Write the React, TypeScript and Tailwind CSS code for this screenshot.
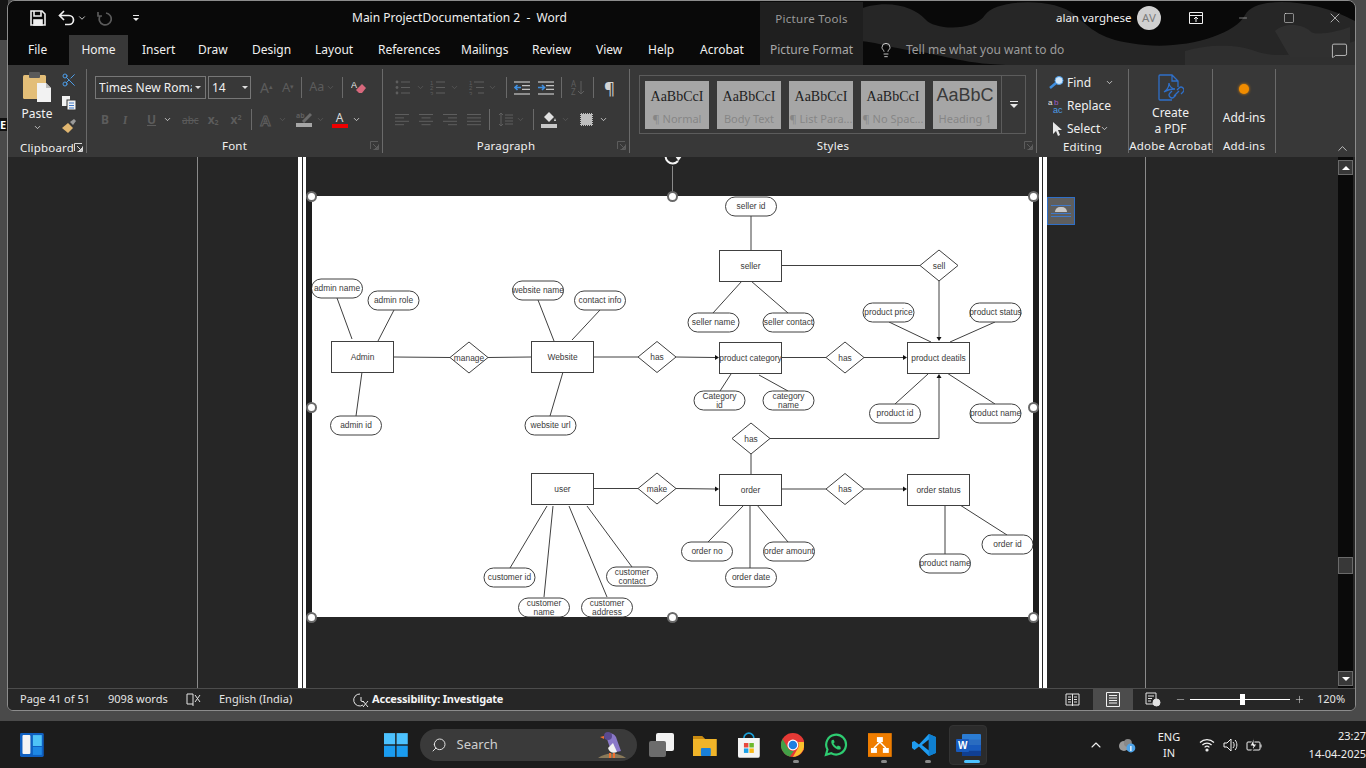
import React from "react";
import { ChevronDown, ChevronUp, X, Minus, Square, Lightbulb, MessageSquare, Search, Scissors, Plus } from "lucide-react";

const FONT = { fontFamily: '"Noto Sans","Open Sans",sans-serif' } as const;

type P = { x: number; y: number };
const rects: [string, number, number][] = [
  ["Admin", 332, 341], ["Website", 532, 341], ["seller", 720, 250], ["product category", 720, 342],
  ["product deatils", 908, 342], ["user", 532, 473], ["order", 720, 474], ["order status", 908, 474],
];
const diamonds: [string, number, number][] = [
  ["manage", 470, 357.5], ["has", 658, 357], ["sell", 940, 265.5], ["has", 846, 357.5],
  ["has", 752, 438.5], ["make", 658, 488.5], ["has", 846, 489],
];
const pills: [string[], number, number][] = [
  [["admin name"], 338, 288.5], [["admin role"], 394.5, 300.5], [["admin id"], 357, 425.5],
  [["website name"], 539, 290.5], [["contact info"], 601, 300.5], [["website url"], 551.5, 425.5],
  [["seller id"], 752, 206.5], [["seller name"], 714.5, 322.5], [["seller contact"], 789.5, 322.5],
  [["product price"], 889.5, 312.5], [["product status"], 996.5, 312.5], [["product id"], 896, 413.5], [["product name"], 996.5, 413.5],
  [["Category", "id"], 720.5, 400.5], [["category", "name"], 789.5, 400.5],
  [["order no"], 708, 551.5], [["order amount"], 790, 551.5], [["order date"], 752, 577.5],
  [["product name"], 946, 563.5], [["order id"], 1008.5, 544.5],
  [["customer id"], 510.5, 577.5], [["customer", "contact"], 633, 576.5], [["customer", "name"], 545, 607.5], [["customer", "address"], 608, 607.5],
];
const lines: number[][] = [
  [338, 298, 353, 339], [395, 310, 379, 341], [363, 372, 357, 416], [395, 357, 451, 357.5], [489, 357.5, 532, 357],
  [539, 300, 555, 341], [601, 310, 573, 340], [564, 372, 551, 416], [595, 357, 639, 357], [677, 357, 716, 357.5],
  [752, 216, 752, 250], [783, 265.5, 921, 265.5], [940, 281, 940, 337], [743, 281, 714, 313], [752, 281, 789, 313],
  [783, 357.5, 827, 357.5], [865, 357.5, 904, 357.5], [890, 322, 932, 342], [996, 322, 951, 342],
  [929, 374, 896, 404], [948, 373, 996, 404], [732, 374, 721, 391], [760, 375, 789, 391],
  [771, 438.5, 940, 438.5], [940, 438.5, 940, 378], [752, 454, 752, 474],
  [595, 488.5, 639, 488.5], [676.5, 488.5, 716, 489], [783, 489, 827, 489], [865, 489, 904, 489],
  [745, 505, 709, 542], [751, 505, 751, 568], [758, 505, 789, 542], [946, 506, 946, 554], [961, 505, 1008, 535],
  [548, 506, 511, 568], [554, 506, 545, 597], [570, 506, 608, 597], [588, 506, 633, 567],
];

function Diagram() {
  return (
    <svg width="721" height="421" viewBox="313 196 721 421" className="block bg-white">
      <g fill="none" stroke="#404040" strokeWidth="1">
        {lines.map((l, i) => <line key={i} x1={l[0]} y1={l[1]} x2={l[2]} y2={l[3]} />)}
        {rects.map(([t, x, y], i) => <rect key={i} x={x + 0.5} y={y + 0.5} width="62" height="31" fill="#fff" />)}
        {diamonds.map(([t, x, y], i) => <polygon key={i} fill="#fff" points={`${x - 19},${y} ${x},${y - 15.5} ${x + 19},${y} ${x},${y + 15.5}`} />)}
        {pills.map(([t, x, y], i) => <rect key={i} x={x - 25.5} y={y - 9.5} width="51" height="19" rx="9.5" fill="#fff" />)}
      </g>
      <g fill="#111">
        <polygon points="720,357.5 716,355 716,360" /><polygon points="908,357.5 904,355 904,360" />
        <polygon points="940,341 937.5,337 942.5,337" /><polygon points="940,374 937.5,378 942.5,378" />
        <polygon points="720,489 716,486.5 716,491.5" /><polygon points="908,489 904,486.5 904,491.5" />
      </g>
      <g fill="#3a3a3a" fontFamily='"Liberation Sans",sans-serif' fontSize="8.4" textAnchor="middle">
        {rects.map(([t, x, y], i) => <text key={i} x={x + 31.5} y={y + 18.5}>{t}</text>)}
        {diamonds.map(([t, x, y], i) => <text key={i} x={x} y={y + 3}>{t}</text>)}
        {pills.map(([t, x, y], i) =>
          t.length === 1 ? <text key={i} x={x} y={y + 2.5}>{t[0]}</text> : (
            <text key={i} x={x}><tspan x={x} y={y - 1.8}>{t[0]}</tspan><tspan x={x} y={y + 7.4}>{t[1]}</tspan></text>
          ))}
      </g>
    </svg>
  );
}

function Chev({ dim = false, size = 9 }: { dim?: boolean; size?: number }) {
  return <ChevronDown size={size} strokeWidth={2} color={dim ? "#5c5c5c" : "#e8e8e8"} />;
}
function Sep({ h = 21 }: { h?: number }) {
  return <div className="w-px bg-[#6a6a6a]" style={{ height: h }} />;
}
function Launcher({ dim = false }: { dim?: boolean }) {
  const c = dim ? "#5c5c5c" : "#d8d8d8";
  return (
    <svg width="9" height="9" viewBox="0 0 9 9" fill="none" stroke={c}>
      <path d="M0.5 8V.5H8M8.5 3.5V8.5H3.5M3 3l4 4M7.5 5v2.5H5" />
    </svg>
  );
}
function GroupLabel({ children, launcher, dim }: { children: string; launcher?: boolean; dim?: boolean }) {
  return (
    <div className="h-[16px] relative flex items-center justify-center text-[11.5px] text-[#f0f0f0] tracking-[0.2px] leading-none">
      {children}
      {launcher && <span className="absolute right-[3px] top-[3px]"><Launcher dim={dim} /></span>}
    </div>
  );
}
const G = ({ c = "#5e5e5e", children, w = 14, h = 14, vb }: { c?: string; children: React.ReactNode; w?: number; h?: number; vb?: string }) => (
  <svg width={w} height={h} viewBox={vb || `0 0 ${w} ${h}`} fill="none" stroke={c} strokeWidth="1">{children}</svg>
);
function AlignIco({ kind }: { kind: "l" | "c" | "r" | "j" }) {
  const rows = [0, 1, 2, 3].map((i) => {
    const short = i % 2 === 1;
    const len = kind === "j" || !short ? 14 : 9;
    const x = kind === "l" ? 0 : kind === "r" ? 14 - len : (14 - len) / 2;
    return <line key={i} x1={x} x2={x + len} y1={1.5 + i * 3.4} y2={1.5 + i * 3.4} />;
  });
  return <G h={13}>{rows}</G>;
}
function ListIco({ n }: { n: number }) {
  return (
    <G w={15} h={15} c="#5e5e5e">
      {[2, 7.5, 13].map((y, i) => (
        <g key={i}>
          {n === 0 ? <circle cx="2" cy={y} r="1.4" fill="#5e5e5e" stroke="none" /> : <text x="0" y={y + 2.5} fontSize="6" fill="#5e5e5e" stroke="none" fontFamily="Liberation Sans">{i + 1}</text>}
          <line x1={n === 2 ? 5 + i * 2 : 6} x2="15" y1={y} y2={y} />
        </g>
      ))}
    </G>
  );
}
function IndentIco({ dir }: { dir: number }) {
  return (
    <G w={16} h={14} c="#e4e4e4">
      <path d="M0 1h16M8 4.7h8M8 8.3h8M0 13h16" />
      <path d={dir < 0 ? "M7 6.5H1M3.5 4L1 6.5 3.5 9" : "M0 6.5h6M4 4l2.5 2.5L4 9"} stroke="#3f8fe0" strokeWidth="1.6" />
    </G>
  );
}
const DimText = ({ children, cls = "" }: { children: React.ReactNode; cls?: string }) => (
  <span className={`text-[#5c5c5c] leading-none ${cls}`}>{children}</span>
);

function Clipboard() {
  return (
    <div className="w-[79px] flex flex-col border-r border-[#6a6a6a]">
      <div className="h-[68px] flex">
        <div className="w-[55px] flex flex-col items-center pl-[3px]">
          <svg width="29" height="31" viewBox="0 0 29 31" className="mt-[2px]">
            <rect x="0" y="4" width="23" height="24" rx="1.5" fill="#e3be78" />
            <rect x="6" y="1" width="11" height="6" rx="1" fill="#5a5a5a" />
            <path d="M14 12h9l5 5v14H14z" fill="#f2f2f2" />
            <path d="M23 12v5h5" fill="#bbb" />
          </svg>
          <div className="text-[12px] text-[#f2f2f2] leading-none mt-[6px]">Paste</div>
          <div className="mt-[3px]"><Chev /></div>
        </div>
        <div className="flex flex-col items-center w-[18px] gap-[7px] pt-[3px] -ml-[3px]">
          <Scissors size={16} color="#4d9de8" strokeWidth={1.5} className="-scale-y-100" />
          <svg width="16" height="16" viewBox="0 0 16 16">
            <rect x="1" y="1" width="8" height="10" fill="#f2f2f2" /><rect x="6" y="5" width="9" height="10" fill="#f2f2f2" stroke="#333" />
            <path d="M8 8h5M8 10.5h5M8 13h5" stroke="#3f78c8" />
          </svg>
          <svg width="17" height="16" viewBox="0 0 17 16">
            <path d="M1 10l6-5 5 5-5 5z" fill="#e0b670" /><path d="M9 4l4-3 2 2-3 4z" fill="#9a9a9a" />
          </svg>
        </div>
      </div>
      <div className="mt-[6px]"><GroupLabel launcher>Clipboard</GroupLabel></div>
    </div>
  );
}

function FontGroup() {
  return (
    <div className="w-[296px] flex flex-col border-r border-[#6a6a6a]">
      <div className="h-[74px] pl-[8px] pt-[7px]">
        <div className="flex items-center h-[23px]">
          <div className="w-[111px] h-[23px] border border-[#777] flex items-center pl-[3px] text-[12px] text-[#f0f0f0] whitespace-nowrap overflow-hidden">
            <span className="w-[93px] overflow-hidden shrink-0">Times New Roman</span>
            <span className="ml-[3px] w-0 h-0 border-x-[3px] border-x-transparent border-t-[3px] border-t-[#ddd]" />
          </div>
          <div className="ml-[2px] w-[43px] h-[23px] border border-[#777] flex items-center pl-[3px] text-[12px] text-[#f0f0f0]">
            <span className="w-[30px]">14</span>
            <span className="w-0 h-0 border-x-[3.5px] border-x-transparent border-t-[3.5px] border-t-[#ddd]" />
          </div>
          <DimText cls="text-[14px] ml-[9px]">A<sup className="text-[7px]">▴</sup></DimText>
          <DimText cls="text-[13px] ml-[9px]">A<sup className="text-[7px]">▾</sup></DimText>
          <div className="ml-[7px]"><Sep /></div>
          <DimText cls="text-[12.5px] ml-[7px]">Aa</DimText>
          <span className="ml-[2px]"><Chev dim /></span>
          <div className="ml-[7px]"><Sep /></div>
          <svg width="16" height="16" viewBox="0 0 16 16" className="ml-[8px]">
            <path d="M8 13l-3-3 6-6 4 4-4 5z" fill="#d8687c" /><text x="0" y="8" fontSize="9" fill="#e8e8e8" fontFamily="Liberation Sans">A</text>
          </svg>
        </div>
        <div className="flex items-center h-[23px] mt-[9px] text-[12px] font-bold">
          <DimText cls="ml-[6px] w-[16px]">B</DimText>
          <DimText cls="ml-[6px] w-[14px] italic font-serif">I</DimText>
          <DimText cls="ml-[10px] underline">U</DimText>
          <span className="ml-[7px]"><Chev /></span>
          <DimText cls="ml-[10px] line-through text-[10px] font-normal">abc</DimText>
          <DimText cls="ml-[9px]">x<sub className="text-[7px]">2</sub></DimText>
          <DimText cls="ml-[12px]">x<sup className="text-[7px]">2</sup></DimText>
          <div className="ml-[9px]"><Sep /></div>
          <svg width="16" height="16" viewBox="0 0 16 16" className="ml-[7px]"><text x="1" y="14" fontSize="15" fill="none" stroke="#5e5e5e" fontFamily="Liberation Sans">A</text></svg>
          <span className="ml-[3px]"><Chev dim /></span>
          <div className="ml-[9px] w-[16px] flex flex-col items-center">
            <svg width="16" height="11" viewBox="0 0 16 11"><path d="M7 10l8-8" stroke="#6a6a6a" strokeWidth="3" /><text x="0" y="6" fontSize="7" fill="#5e5e5e" stroke="none">ab</text></svg>
            <div className="w-[16px] h-[4px] bg-[#a6a6a6]" />
          </div>
          <span className="ml-[4px]"><Chev dim /></span>
          <div className="ml-[7px] w-[16px] flex flex-col items-center">
            <span className="text-[12px] text-[#d8d8d8] font-normal leading-[12px]">A</span>
            <div className="w-[16px] h-[4px] bg-[#f00000]" />
          </div>
          <span className="ml-[4px]"><Chev /></span>
        </div>
      </div>
      <GroupLabel launcher dim>Font</GroupLabel>
    </div>
  );
}

function ParaGroup() {
  return (
    <div className="w-[247px] flex flex-col border-r border-[#6a6a6a]">
      <div className="h-[74px] pt-[7px] pl-[12px]">
        <div className="flex items-center h-[23px]">
          <ListIco n={0} /><span className="ml-[6px]"><Chev dim /></span>
          <span className="ml-[5px]"><ListIco n={1} /></span><span className="ml-[5px]"><Chev dim /></span>
          <span className="ml-[10px]"><ListIco n={2} /></span><span className="ml-[4px]"><Chev dim /></span>
          <div className="ml-[9px]"><Sep /></div>
          <span className="ml-[7px]"><IndentIco dir={-1} /></span>
          <span className="ml-[8px]"><IndentIco dir={1} /></span>
          <div className="ml-[7px]"><Sep /></div>
          <svg width="14" height="16" viewBox="0 0 14 16" className="ml-[9px]"><text x="0" y="7" fontSize="8" fill="#5e5e5e">A</text><text x="0" y="15" fontSize="8" fill="#5e5e5e">Z</text><path d="M10 1v13M7 11l3 3 3-3" stroke="#5e5e5e" fill="none" /></svg>
          <div className="ml-[8px]"><Sep /></div>
          <span className="ml-[10px] text-[17px] text-[#d4d4d4] leading-none">¶</span>
        </div>
        <div className="flex items-center h-[23px] mt-[9px]">
          <AlignIco kind="l" /><span className="ml-[10px]"><AlignIco kind="c" /></span><span className="ml-[10px]"><AlignIco kind="r" /></span><span className="ml-[10px]"><AlignIco kind="j" /></span>
          <div className="ml-[8px]"><Sep /></div>
          <svg width="15" height="15" viewBox="0 0 15 15" className="ml-[8px]" fill="none" stroke="#5e5e5e"><path d="M3 1v13M1 3l2-2 2 2M1 12l2 2 2-2M7 3h8M7 6h8M7 9h8M7 12h8" /></svg>
          <span className="ml-[3px]"><Chev dim /></span>
          <div className="ml-[8px]"><Sep /></div>
          <div className="ml-[7px] w-[16px] flex flex-col items-center">
            <svg width="16" height="12" viewBox="0 0 16 12"><path d="M3 5l5-5 5 5-5 5z" fill="#e0e0e0" /><path d="M14 6l1 3h-2z" fill="#e0e0e0" /></svg>
            <div className="w-[16px] h-[4px] bg-[#c8c8c8]" />
          </div>
          <span className="ml-[4px]"><Chev dim /></span>
          <div className="ml-[10px] w-[13px] h-[13px] bg-[#bdbdbd] border border-dotted border-[#333]" />
          <span className="ml-[6px]"><Chev /></span>
        </div>
      </div>
      <GroupLabel launcher dim>Paragraph</GroupLabel>
    </div>
  );
}

const styleItems: [string, string, string][] = [
  ["AaBbCcI", "¶ Normal", "serif"], ["AaBbCcI", "Body Text", "serif"], ["AaBbCcI", "¶ List Para...", "serif"],
  ["AaBbCcI", "¶ No Spac...", "serif"], ["AaBbC", "Heading 1", "sans"],
];
function Styles() {
  return (
    <div className="w-[407px] flex flex-col border-r border-[#6a6a6a]">
      <div className="h-[74px] pt-[6px] pl-[9px]">
        <div className="w-[387px] h-[59px] border border-[#5c5c5c] flex items-start">
          <div className="flex gap-[8px] pl-[5px] pt-[5px]">
            {styleItems.map(([a, b, f], i) => (
              <div key={i} className="w-[64px] h-[48px] bg-[#a6a6a6] flex flex-col items-center overflow-hidden">
                <div className={f === "serif" ? "text-[#1e1e1e] text-[14px] mt-[6px] h-[20px] leading-[20px] font-['Liberation_Serif']" : "text-[#3a3a3a] text-[18px] mt-[3px] h-[23px] leading-[23px] font-['Liberation_Sans']"}>{a}</div>
                <div className="text-[#868686] text-[11px] mt-[5px] leading-[14px] whitespace-nowrap">{b}</div>
              </div>
            ))}
          </div>
          <div className="ml-[4px] w-[24px] h-[57px] border-l border-[#5c5c5c] flex flex-col items-center justify-center">
            <div className="w-[8px] h-px bg-[#e8e8e8] mb-[2px]" />
            <span className="w-0 h-0 border-x-[4px] border-x-transparent border-t-[4px] border-t-[#e8e8e8]" />
          </div>
        </div>
      </div>
      <GroupLabel launcher dim>Styles</GroupLabel>
    </div>
  );
}

function Editing() {
  return (
    <div className="w-[92px] flex flex-col border-r border-[#6a6a6a]">
      <div className="h-[74px] pl-[12px] text-[12px] text-[#f0f0f0] leading-none">
        <div className="flex items-center h-[23px] mt-[2px]">
          <svg width="15" height="14" viewBox="0 0 15 14"><circle cx="10" cy="4.5" r="4" fill="#cfe6fb" stroke="#4d9de8" /><path d="M7 7L1 12" stroke="#3f8fe0" strokeWidth="2.5" /></svg>
          <span className="ml-[3px]">Find</span><span className="ml-[14px]"><Chev /></span>
        </div>
        <div className="flex items-center h-[23px]">
          <svg width="16" height="16" viewBox="0 0 16 16" className="-ml-[1px]"><text x="0" y="7" fontSize="8" fill="#e4e4e4" fontFamily="Liberation Sans">a</text><text x="6" y="7" fontSize="8" fill="#a05cc8" fontFamily="Liberation Sans">b</text><text x="5" y="15" fontSize="9" fill="#4d9de8" fontFamily="Liberation Sans">ac</text></svg>
          <span className="ml-[3px]">Replace</span>
        </div>
        <div className="flex items-center h-[23px]">
          <svg width="12" height="16" viewBox="0 0 12 16" className="ml-[3px]"><path d="M1 1v12l3-3 2 5 2-1-2-5h4z" fill="#e8e8e8" /></svg>
          <span className="ml-[3px]">Select</span><Chev />
        </div>
      </div>
      <GroupLabel>Editing</GroupLabel>
    </div>
  );
}

function Acrobat() {
  return (
    <div className="w-[84px] flex flex-col border-r border-[#6a6a6a]">
      <div className="h-[74px] flex flex-col items-center text-[12px] text-[#f0f0f0] leading-[16px]">
        <svg width="26" height="30" viewBox="0 0 26 30" fill="none" stroke="#2f6fc8" strokeWidth="1.3" className="mt-[5px]">
          <path d="M14 26H2a1 1 0 0 1-1-1V2a1 1 0 0 1 1-1h12l6 6v6M14 1v6h6" />
          <path d="M6 18c3-2 5-6 5-9 0 3 3 6 6 6-4 0-8 1-11 3z" />
          <path d="M16 22l5-5m-2-1l2-2a2.5 2.5 0 0 1 4 4l-2 2m-5 1l-2 2a2.5 2.5 0 0 1-4-4l2-2" />
        </svg>
        <div className="mt-[1px]">Create</div>
        <div>a PDF</div>
      </div>
      <GroupLabel>Adobe Acrobat</GroupLabel>
    </div>
  );
}

function AddIns() {
  return (
    <div className="w-[63px] flex flex-col border-r border-[#6a6a6a]">
      <div className="h-[74px] flex flex-col items-center text-[12px] text-[#f0f0f0] leading-[16px]">
        <div className="w-[10px] h-[10px] rounded-full bg-[#f08c00] mt-[15px] shadow-[0_0_3px_#f08c00]" />
        <div className="mt-[16px]">Add-ins</div>
      </div>
      <GroupLabel>Add-ins</GroupLabel>
    </div>
  );
}

function Handle({ x, y }: { x: string; y: string }) {
  return <div className={`absolute ${x} ${y} w-[11px] h-[11px] rounded-full bg-white border-[2px] border-[#6a6a6a]`} />;
}

function Tab({ t, cls = "" }: { t: string; cls?: string }) {
  return <div className={`h-[30px] flex items-center whitespace-nowrap ${cls}`}>{t}</div>;
}

function TrayIcons() {
  return (
    <>
      <svg width="16" height="14" viewBox="0 0 16 14" fill="none" stroke="#f0f0f0" strokeWidth="1.2"><path d="M1 4.5a10 10 0 0 1 14 0M3.4 7a6.5 6.5 0 0 1 9.2 0M5.6 9.4a3.4 3.4 0 0 1 4.8 0" /><circle cx="8" cy="12" r="1" fill="#f0f0f0" /></svg>
      <svg width="16" height="16" viewBox="0 0 16 16" fill="none" stroke="#f0f0f0" className="ml-[8px]"><path d="M1 6h3l4-4v12l-4-4H1zM10 5c1.5 1.5 1.5 4.5 0 6M12 3c2.5 2.5 2.5 7.5 0 10" /></svg>
      <svg width="17" height="15" viewBox="0 0 17 15" fill="none" stroke="#f0f0f0" className="ml-[7px]"><rect x="1" y="5" width="13" height="8" rx="1" /><path d="M15 7.5v3" /><path d="M8 1L4 9h3l-1 5 5-7H8z" fill="#f0f0f0" stroke="#1c1c1c" /></svg>
    </>
  );
}

export default function App() {
  return (
    <div className="w-[1366px] h-[768px] overflow-hidden flex flex-col bg-[#4a4a4a] relative" style={FONT}>
      <div className="absolute left-0 top-0 w-[8px] h-[40px] bg-[#161616]" />
      <div className="absolute left-0 top-[118px] w-[8px] h-[13px] bg-[#111] text-white text-[11px] font-bold leading-[13px]">E</div>

      {/* window */}
      <div className="ml-[7px] w-[1349px] h-[711px] shrink-0 relative rounded-t-[8px] rounded-b-[6px] border border-[#8c8c8c] overflow-hidden flex flex-col bg-[#262626] z-10">
        {/* title and tabs */}
        <div className="h-[64px] shrink-0 bg-[#090909] relative">
          <svg width="500" height="64" viewBox="0 0 500 64" className="absolute right-0 top-0" fill="#262626">
            <path d="M0 10c30-14 60-4 70 8s50 12 60-4 70-18 90 0 30 26 70 30 90-10 100-30 70-16 110 6v44H160c-50 0-70-10-100-14S20 40 0 40z" />
            <path d="M330 50c20-6 50-8 70 0s60 4 100-10v24H330z" fill="#2f2f2f" />
            <path d="M420 30c10-10 30-6 35 0s30 0 40-4v30h-60z" fill="#303030" />
          </svg>
          <div className="relative h-[34px] flex items-center text-[#f0f0f0]">
            <svg width="18" height="18" viewBox="0 0 18 18" className="ml-[21px]" fill="none" stroke="#f0f0f0" strokeWidth="1.6"><path d="M2 2h11l3 3v11H2z" /><path d="M5 2v5h7V2" /><rect x="5" y="11" width="8" height="5" fill="#f0f0f0" /></svg>
            <svg width="18" height="16" viewBox="0 0 18 16" className="ml-[11px]" fill="none" stroke="#f0f0f0" strokeWidth="1.7"><path d="M6 1L1.5 5.5 6 10M2 5.5h9a4.5 4.5 0 0 1 0 9H7" /></svg>
            <span className="ml-[1px]"><Chev size={10} /></span>
            <svg width="15" height="15" viewBox="0 0 15 15" className="ml-[10px]" fill="none" stroke="#5a5a5a" strokeWidth="1.7"><path d="M9 2a6 6 0 1 1-6 3M1 1v4h4" /></svg>
            <div className="ml-[21px] flex flex-col items-center gap-[2px]"><div className="w-[6px] h-px bg-[#e8e8e8]" /><span className="w-0 h-0 border-x-[3px] border-x-transparent border-t-[3px] border-t-[#e8e8e8]" /></div>
            <div className="ml-[213px] text-[12px] whitespace-pre w-[204px]">Main ProjectDocumentation 2  -  Word</div>
            <div className="ml-[204px] w-[103px] h-[33px] mt-[1px] bg-[#1f1f1f] flex items-center justify-center text-[11.5px] text-[#9a9a9a] tracking-[0.3px]">Picture Tools</div>
            <div className="ml-[193px] text-[11.5px] w-[72px] whitespace-nowrap">alan varghese</div>
            <div className="ml-[9px] w-[24px] h-[24px] rounded-full bg-[#d0d0d0] flex items-center justify-center text-[11.5px] text-[#7c7c7c]">AV</div>
            <svg width="14" height="12" viewBox="0 0 14 12" className="ml-[28px]" fill="none" stroke="#f0f0f0"><path d="M.5 3.5h13M.5.5h13v11H.5zM7 10V5.5M5 7l2-2 2 2" /></svg>
            <Minus size={12} strokeWidth={1} className="ml-[34px]" />
            <Square size={12} strokeWidth={1} className="ml-[34px]" />
            <X size={16} strokeWidth={1} className="ml-[32px]" />
          </div>
          <div className="relative h-[30px] flex items-center text-[12px] text-[#f0f0f0]">
            <Tab t="File" cls="ml-[20px] w-[41px]" />
            <div className="h-[30px] w-[59px] bg-[#383838] flex items-center justify-center">Home</div>
            <Tab t="Insert" cls="ml-[14px] w-[56px]" />
            <Tab t="Draw" cls="w-[54px]" />
            <Tab t="Design" cls="w-[63px]" />
            <Tab t="Layout" cls="w-[63px]" />
            <Tab t="References" cls="w-[83px]" />
            <Tab t="Mailings" cls="w-[71px]" />
            <Tab t="Review" cls="w-[64px]" />
            <Tab t="View" cls="w-[52px]" />
            <Tab t="Help" cls="w-[52px]" />
            <Tab t="Acrobat" cls="w-[60px]" />
            <div className="h-[30px] w-[103px] bg-[#1f1f1f] flex items-center justify-center text-[#a8a8a8]">Picture Format</div>
            <Lightbulb size={16} strokeWidth={1.2} className="ml-[15px]" />
            <div className="ml-[12px] text-[#9c9c9c]">Tell me what you want to do</div>
            <MessageSquare size={17} strokeWidth={1} className="ml-[267px]" />
          </div>
        </div>

        {/* ribbon */}
        <div className="h-[92px] shrink-0 bg-[#383838] pt-[4px] pb-[4px] flex relative">
          <Clipboard />
          <FontGroup />
          <ParaGroup />
          <Styles />
          <Editing />
          <Acrobat />
          <AddIns />
          <ChevronUp size={15} strokeWidth={1.2} color="#e8e8e8" className="absolute right-[5px] bottom-[1px]" />
        </div>

        {/* document */}
        <div className="h-[531px] shrink-0 flex bg-[#262626] relative overflow-hidden">
          <div className="w-[190px] shrink-0 border-r border-[#8a8a8a]" />
          <div className="w-[100px] shrink-0" />
          <div className="w-[4px] shrink-0 bg-white" />
          <div className="w-[1px] shrink-0" />
          <div className="w-[3px] shrink-0 bg-white" />
          <div className="w-[733px] shrink-0 pt-[39px]">
            <div className="relative w-[733px] h-[421px] border-x-[6px] border-[#1d1d1d]">
              <Diagram />
              <div className="absolute left-[360px] -top-[30px] w-px h-[30px] bg-[#8a8a8a]" />
              <svg width="18" height="18" viewBox="0 0 18 18" className="absolute left-[352px] -top-[48px]" fill="none" stroke="#f4f4f4" strokeWidth="2"><path d="M14 13a7 7 0 1 1 0-9" /><path d="M11 8h7l-3.5 5z" fill="#f4f4f4" stroke="none" /></svg>
              <Handle x="-left-[6px]" y="-top-[5px]" />
              <Handle x="left-[355px]" y="-top-[5px]" />
              <Handle x="left-[716px]" y="-top-[5px]" />
              <Handle x="-left-[6px]" y="top-[206px]" />
              <Handle x="left-[716px]" y="top-[206px]" />
              <Handle x="-left-[6px]" y="top-[416px]" />
              <Handle x="left-[355px]" y="top-[416px]" />
              <Handle x="left-[716px]" y="top-[416px]" />
            </div>
          </div>
          <div className="w-[3px] shrink-0 bg-white" />
          <div className="w-[1px] shrink-0" />
          <div className="w-[4px] shrink-0 bg-white" />
          <div className="relative w-[99px] shrink-0 border-r border-[#8a8a8a]">
            <div className="absolute left-0 top-[40px] w-[28px] h-[28px] bg-[#5e5e5e] border border-[#2f6fc8] flex flex-col items-center justify-center gap-[1px]">
              <div className="w-[20px] h-px bg-[#3f78c8]" />
              <div className="w-[12px] h-[5px] rounded-t-full bg-[#c8c8c8]" />
              <div className="w-[20px] h-px bg-[#3f78c8]" />
              <div className="w-[20px] h-px bg-[#3f78c8] mt-[1px]" />
            </div>
          </div>
          <div className="w-[192px] shrink-0" />
          <div className="w-[15px] shrink-0 bg-[#0a0a0a] flex flex-col pt-[3px] pb-[2px]">
            <div className="w-[15px] h-[15px] bg-[#383838] border border-[#6a6a6a] flex items-center justify-center"><span className="w-0 h-0 border-x-[4px] border-x-transparent border-b-[4px] border-b-white" /></div>
            <div className="w-[15px] h-[17px] bg-[#383838] border border-[#6a6a6a] mt-[382px]" />
            <div className="w-[15px] h-[15px] bg-[#383838] border border-[#6a6a6a] mt-[97px] flex items-center justify-center"><span className="w-0 h-0 border-x-[4px] border-x-transparent border-t-[4px] border-t-white" /></div>
          </div>
          <div className="flex-1" />
        </div>

        {/* status */}
        <div className="flex-1 border-t border-[#4c4c4c] bg-[#262626] flex items-center text-[11px] text-[#e4e4e4]">
          <span className="ml-[12px] w-[88px] whitespace-nowrap">Page 41 of 51</span>
          <span className="w-[78px] whitespace-nowrap">9098 words</span>
          <svg width="15" height="15" viewBox="0 0 15 15" fill="none" stroke="#e4e4e4"><path d="M7 2H1v10h6v2M7 2v10" /><path d="M9 3l5 7M14 3l-5 7" /></svg>
          <span className="ml-[18px] w-[134px] whitespace-nowrap">English (India)</span>
          <svg width="16" height="16" viewBox="0 0 16 16" fill="none" stroke="#e4e4e4"><path d="M7 2a6 6 0 1 0 3 11M8 5v4l3 1" /><path d="M10 9l5 6M15 9l-5 6" /></svg>
          <span className="ml-[3px] w-[130px] font-bold text-[#f4f4f4] whitespace-nowrap tracking-[-0.2px]">Accessibility: Investigate</span>
          <div className="flex-1" />
          <svg width="15" height="14" viewBox="0 0 15 14" fill="none" stroke="#e4e4e4"><path d="M1 1h13v11H1zM7.5 1v12M3 4h3M3 6.500h3M3 9h3M9 4h3M9 6.500h3M9 9h3" /></svg>
          <div className="ml-[13px] w-[40px] h-[21px] bg-[#4c4c4c] flex items-center justify-center">
            <svg width="14" height="15" viewBox="0 0 14 15" fill="none" stroke="#f0f0f0"><path d="M.5.5h13v14H.5zM3 3.500h8M3 6h8M3 8.500h8M3 11h8" /></svg>
          </div>
          <svg width="16" height="15" viewBox="0 0 16 15" fill="none" stroke="#e4e4e4" className="ml-[12px]"><path d="M1 1h10v11H1zM3 4h6M3 6.500h4M3 9h3" /><circle cx="11.500" cy="10.500" r="3.500" fill="#e4e4e4" /></svg>
          <Minus size={11} strokeWidth={1.2} className="ml-[14px]" />
          <div className="ml-[4px] w-[100px] h-px bg-white relative"><div className="absolute left-[50px] -top-[5px] w-[5px] h-[11px] bg-white" /></div>
          <Plus size={11} strokeWidth={1.2} className="ml-[4px]" />
          <span className="ml-[12px] w-[38px] whitespace-nowrap">120%</span>
        </div>
      </div>

      {/* taskbar */}
      <div className="mt-[10px] h-[47px] shrink-0 bg-[#1c1c1c] flex items-center relative">
        <svg width="24" height="24" viewBox="0 0 24 24" className="ml-[20px]"><rect width="24" height="24" rx="1.500" fill="#0f5fc0" /><rect x="2.500" y="2" width="8" height="19" rx="1" fill="#f4f4f4" /><rect x="13" y="2" width="9" height="11" fill="#4fc3f7" /><rect x="13" y="14" width="9" height="8" fill="#1e88e5" /></svg>
        <svg width="24" height="24" viewBox="0 0 24 24" className="ml-[340px]"><rect width="11.300" height="11.300" fill="#4cc2ff" /><rect x="12.700" width="11.300" height="11.300" fill="#4cc2ff" /><rect y="12.700" width="11.300" height="11.300" fill="#1a9cf0" /><rect x="12.700" y="12.700" width="11.300" height="11.300" fill="#1a9cf0" /></svg>
        <div className="ml-[12px] w-[220px] h-[32px] rounded-full bg-[#3a3a3a] flex items-center text-[13px] text-[#cfcfcf]">
          <Search size={16} strokeWidth={1.5} className="ml-[11px] -scale-x-100" color="#e0e0e0" />
          <span className="ml-[10px]">Search</span>
          <svg width="32" height="30" viewBox="0 0 32 30" className="ml-[98px]">
            <path d="M2 28c8-6 20-6 28 0z" fill="#8a7a5a" /><path d="M10 6c4-5 10-2 11 4l4 11c-6 2-10 0-12-6z" fill="#8a78c8" /><circle cx="12" cy="6" r="4" fill="#5a4a90" /><path d="M8 6l-4 1 4 2z" fill="#f07030" /><path d="M12 18c1 4 5 6 9 4l-4-9z" fill="#f2f2f2" /><path d="M14 23v5M18 23v5" stroke="#f07030" strokeWidth="2" />
          </svg>
        </div>
        <div className="ml-[12px] relative w-[25px] h-[24px]">
          <div className="absolute left-[7px] top-0 w-[18px] h-[18px] rounded-[2px] bg-[#f2f2f2]" />
          <div className="absolute left-0 top-[8px] w-[17px] h-[16px] rounded-[2px] bg-[#6c6c6c]" />
        </div>
        <svg width="25" height="24" viewBox="0 0 25 24" className="ml-[19px]"><path d="M0 3h9l3 3h12v17H0z" fill="#f0b429" /><path d="M0 3h9l3 3H0z" fill="#c98a10" /><rect x="8" y="15" width="10" height="8" rx="1" fill="#1a80d8" /></svg>
        <svg width="24" height="26" viewBox="0 0 24 26" className="ml-[19px]"><path d="M1 6h22v18a2 2 0 0 1-2 2H3a2 2 0 0 1-2-2z" fill="#f4f4f4" /><path d="M7 6a5 5 0 0 1 10 0" fill="none" stroke="#1aa0d8" strokeWidth="1.600" /><rect x="7" y="11" width="4.500" height="4.500" fill="#e8483c" /><rect x="12.500" y="11" width="4.500" height="4.500" fill="#6cb82c" /><rect x="7" y="16.500" width="4.500" height="4.500" fill="#1aa0e8" /><rect x="12.500" y="16.500" width="4.500" height="4.500" fill="#f8b818" /></svg>
        <svg width="24" height="24" viewBox="0 0 24 24" className="ml-[20px]"><circle cx="12" cy="12" r="12" fill="#e53935" /><path d="M12 24A12 12 0 0 1 1.600 6L7 15a6 6 0 0 0 6 3l-4 5.600z" fill="#43a047" /><path d="M12 24l5.200-9a6 6 0 0 0 0-6H23a12 12 0 0 1-11 15z" fill="#fbc02d" /><circle cx="12" cy="12" r="5.500" fill="#fff" /><circle cx="12" cy="12" r="4.300" fill="#1e7fe0" /></svg>
        <svg width="24" height="24" viewBox="0 0 24 24" className="ml-[20px]" fill="none"><path d="M2 22l1.500-5.500a10 10 0 1 1 3.800 3.800z" stroke="#2ecc71" strokeWidth="2.200" /><path d="M8 7c-1.500 2 0 5 2 7s5 3.500 7 2l-.5-2.500-2.500-1-1 1.200c-1.500-.7-2.800-2-3.400-3.400l1.200-1-1-2.500z" fill="#2ecc71" /></svg>
        <svg width="24" height="24" viewBox="0 0 24 24" className="ml-[20px]"><rect width="24" height="24" fill="#ef7d00" /><rect x="9" y="4" width="6" height="5" fill="#fff" /><rect x="3" y="15" width="6" height="5" fill="#fff" /><rect x="15" y="15" width="6" height="5" fill="#fff" /><path d="M12 9l-6 6M12 9l6 6" stroke="#fff" strokeWidth="1.500" /></svg>
        <svg width="24" height="24" viewBox="0 0 24 24" className="ml-[20px]"><path d="M17 1l7 3v16l-7 3-10-9.500-4.500 3.500L0 15V9l2.500-1 4.500 3.500z" fill="#1f9cf0" /><path d="M17 6.500L10 12l7 5.500z" fill="#1c1c1c" /><path d="M17 1l7 3v16l-7 3z" fill="#0f7fd0" /></svg>
        <div className="ml-[13px] w-[39px] h-[40px] rounded-[4px] bg-[#2b2b2b] border border-[#333] flex items-center justify-center">
          <svg width="25" height="22" viewBox="0 0 25 22"><rect x="6" y="0" width="19" height="22" rx="1" fill="#2b7cd3" /><rect x="6" y="5.500" width="19" height="5.500" fill="#2a6cc0" /><rect x="6" y="11" width="19" height="5.500" fill="#185abd" /><rect x="6" y="16.500" width="19" height="5.500" fill="#103f91" /><rect x="0" y="5" width="13" height="13" rx="1" fill="#185abd" /><text x="2" y="15" fontSize="10" fontWeight="700" fill="#fff" fontFamily="Liberation Sans">W</text></svg>
        </div>
        <div className="ml-[101px]"><ChevronUp size={16} strokeWidth={1.6} color="#f0f0f0" /></div>
        <svg width="18" height="16" viewBox="0 0 18 16" className="ml-[14px]"><circle cx="6" cy="9" r="5" fill="#9a9a9a" /><circle cx="10" cy="6" r="4" fill="#888" /><circle cx="13" cy="11" r="4.500" fill="#4da3e8" /><path d="M13 9v5" stroke="#fff" strokeWidth="1.300" /></svg>
        <div className="ml-[15px] w-[36px] flex flex-col items-center text-[11px] leading-[16px] text-[#f0f0f0]"><span>ENG</span><span>IN</span></div>
        <div className="ml-[12px] flex items-center"><TrayIcons /></div>
        <div className="ml-[26px] w-[78px] flex flex-col items-end text-[11px] leading-[18px] text-[#f0f0f0]"><span>23:27</span><span>14-04-2025</span></div>
        <div className="absolute left-[793px] top-[39px] w-[6px] h-[3px] rounded-full bg-[#8a8a8a]" />
        <div className="absolute left-[881px] top-[39px] w-[6px] h-[3px] rounded-full bg-[#8a8a8a]" />
        <div className="absolute left-[925px] top-[39px] w-[6px] h-[3px] rounded-full bg-[#8a8a8a]" />
        <div className="absolute left-[964px] top-[39px] w-[16px] h-[3px] rounded-full bg-[#4cc2ff]" />
      </div>
    </div>
  );
}
